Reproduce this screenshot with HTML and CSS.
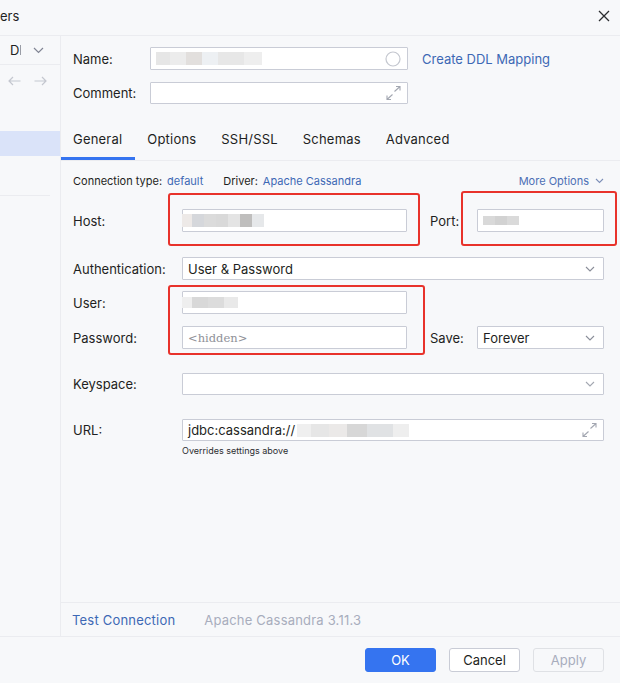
FILE: index.html
```html
<!DOCTYPE html>
<html>
<head>
<meta charset="utf-8">
<link rel="stylesheet" href="styles.css">
</head>
<body>
<div class="window">
  <div class="titlebar">
    <span class="title">ers</span>
    <svg class="close" width="12" height="12" viewBox="0 0 12 12"><path d="M1 1L11 11M11 1L1 11" stroke="#2b2d30" stroke-width="1.3" fill="none"/></svg>
  </div>

  <div class="content">
    <aside class="sidebar">
      <div class="side-top">
        <span class="side-d">D</span><span class="side-cut"></span>
        <svg class="side-chev" width="11" height="7" viewBox="0 0 11 7"><path d="M1 1l4.5 4.5L10 1" stroke="#818594" stroke-width="1.2" fill="none"/></svg>
      </div>
      <div class="side-nav">
        <svg width="13" height="10" viewBox="0 0 13 10"><path d="M12.5 5H1M5 1L1 5l4 4" stroke="#c4c7cf" stroke-width="1.2" fill="none"/></svg>
        <svg width="13" height="10" viewBox="0 0 13 10"><path d="M0.5 5H12M8 1l4 4-4 4" stroke="#c4c7cf" stroke-width="1.2" fill="none"/></svg>
      </div>
      <div class="side-sel"></div>
      <div class="side-line"></div>
    </aside>

    <main class="main">
      <div class="top-row">
        <span class="top-label">Name:</span>
        <div class="field top-field">
          <span class="mosaic">
            <i class="b1"></i><i class="b2"></i><i class="b3"></i><i class="b4"></i><i class="b5"></i><i class="b6"></i>
          </span>
          <svg class="circle" width="16" height="16" viewBox="0 0 16 16"><circle cx="8" cy="8" r="7" stroke="#c4c7cf" stroke-width="1.2" fill="none"/></svg>
        </div>
        <span class="link ddl">Create DDL Mapping</span>
      </div>
      <div class="top-row comment-row">
        <span class="top-label">Comment:</span>
        <div class="field top-field comment-field">
          <svg class="expand" width="15" height="14" viewBox="0 0 15 14"><path d="M8.5 5.5L14 0.5M10 0.5h4v4M6.5 8.5L1 13.5M1 9.5v4h4" stroke="#a3a7b1" stroke-width="1.1" fill="none"/></svg>
        </div>
      </div>

      <nav class="tabs">
        <span class="tab active">General</span>
        <span class="tab">Options</span>
        <span class="tab">SSH/SSL</span>
        <span class="tab">Schemas</span>
        <span class="tab">Advanced</span>
      </nav>

      <div class="meta">
        <span class="meta-label">Connection type:</span>
        <span class="link meta-link">default</span>
        <span class="meta-label driver">Driver:</span>
        <span class="link meta-link">Apache Cassandra</span>
        <span class="link more">More Options
          <svg width="9" height="6" viewBox="0 0 9 6"><path d="M1 1l3.5 3.5L8 1" stroke="#7d8fb8" stroke-width="1.1" fill="none"/></svg>
        </span>
      </div>

      <div class="row row-host">
        <span class="label">Host:</span>
        <div class="field">
          <span class="mosaic host-mosaic">
            <i class="h1"></i><i class="h2"></i><i class="h3"></i><i class="h4"></i><i class="h5"></i><i class="h6"></i><i class="h7"></i>
          </span>
        </div>
        <span class="gap"></span>
        <span class="label">Port:</span>
        <div class="field">
          <span class="mosaic port-mosaic"><i class="p1"></i><i class="p2"></i><i class="p3"></i></span>
        </div>
      </div>

      <div class="row row-auth">
        <span class="label">Authentication:</span>
        <div class="field wide select">
          <span class="value">User &amp; Password</span>
          <svg class="chev" width="10" height="6" viewBox="0 0 10 6"><path d="M1 1l4 4 4-4" stroke="#8a8e99" stroke-width="1.1" fill="none"/></svg>
        </div>
      </div>

      <div class="row row-user">
        <span class="label">User:</span>
        <div class="field">
          <span class="mosaic user-mosaic"><i class="u1"></i><i class="u2"></i><i class="u3"></i><i class="u4"></i></span>
        </div>
      </div>

      <div class="row row-pass">
        <span class="label">Password:</span>
        <div class="field">
          <span class="hidden">&lt;hidden&gt;</span>
        </div>
        <span class="gap"></span>
        <span class="label">Save:</span>
        <div class="field select">
          <span class="value">Forever</span>
          <svg class="chev" width="10" height="6" viewBox="0 0 10 6"><path d="M1 1l4 4 4-4" stroke="#8a8e99" stroke-width="1.1" fill="none"/></svg>
        </div>
      </div>

      <div class="row row-key">
        <span class="label">Keyspace:</span>
        <div class="field wide select">
          <span class="value"></span>
          <svg class="chev" width="10" height="6" viewBox="0 0 10 6"><path d="M1 1l4 4 4-4" stroke="#a3a7b1" stroke-width="1.1" fill="none"/></svg>
        </div>
      </div>

      <div class="row row-url">
        <span class="label">URL:</span>
        <div class="field wide">
          <span class="value">jdbc:cassandra://</span>
          <span class="mosaic url-mosaic"><i class="r1"></i><i class="r2"></i><i class="r3"></i><i class="r4"></i><i class="r5"></i><i class="r6"></i></span>
          <svg class="expand" width="15" height="14" viewBox="0 0 15 14"><path d="M8.5 5.5L14 0.5M10 0.5h4v4M6.5 8.5L1 13.5M1 9.5v4h4" stroke="#a3a7b1" stroke-width="1.1" fill="none"/></svg>
        </div>
      </div>
      <div class="hint">Overrides settings above</div>

      <div class="spacer"></div>

      <div class="footer">
        <span class="link test">Test Connection</span>
        <span class="version">Apache Cassandra 3.11.3</span>
      </div>
    </main>
  </div>

  <div class="buttons">
    <span class="btn ok">OK</span>
    <span class="btn">Cancel</span>
    <span class="btn disabled">Apply</span>
  </div>

  <div class="mark mark-host"></div>
  <div class="mark mark-port"></div>
  <div class="mark mark-user"></div>
</div>
</body>
</html>
```

FILE: styles.css
```css
* { box-sizing: border-box; }

html, body {
  margin: 0;
  padding: 0;
}

body {
  width: 620px;
  height: 683px;
  overflow: hidden;
  background: #f7f8fa;
  font-family: Inter, "Noto Sans", sans-serif;
  font-size: 13px;
  color: #1e1f22;
}

.window {
  position: relative;
  width: 620px;
  height: 683px;
  display: flex;
  flex-direction: column;
}

/* title bar */
.titlebar {
  height: 36px;
  flex: none;
  display: flex;
  align-items: center;
  justify-content: space-between;
  border-bottom: 1px solid #ebecf0;
  padding: 0 10px 1px 0;
}
.title { font-size: 13px; margin-top: -3px; }
.close { margin-top: -3px; }

/* content */
.content {
  flex: 1;
  display: flex;
  border-bottom: 1px solid #ebecf0;
}

.sidebar {
  width: 61px;
  flex: none;
  border-right: 1px solid #ebecf0;
  display: flex;
  flex-direction: column;
}
.side-top {
  height: 29px;
  border-bottom: 1px solid #ebecf0;
  display: flex;
  align-items: center;
  padding-left: 10px;
}
.side-d { font-size: 13px; }
.side-cut {
  width: 1px;
  height: 10px;
  background: #9a9da6;
  margin-left: 1px;
}
.side-chev { margin-left: 12px; }
.side-nav {
  height: 32px;
  display: flex;
  align-items: center;
  gap: 13px;
  padding-left: 8px;
}
.side-sel {
  margin-top: 34px;
  height: 25px;
  background: #dae3f9;
}
.side-line {
  margin-top: 39px;
  height: 1px;
  width: 50px;
  background: #ebecf0;
}

/* main */
.main {
  flex: 1;
  display: flex;
  flex-direction: column;
  padding-top: 11px;
}

.top-row {
  display: flex;
  align-items: center;
  padding-left: 12px;
  height: 23px;
}
.comment-row {
  margin-top: 12px;
  height: 22px;
}
.top-label { width: 77px; }

.field {
  position: relative;
  height: 100%;
  background: #fff;
  border: 1px solid #c9ccd6;
  border-radius: 1px;
  display: flex;
  align-items: center;
  padding: 0 6px 0 5px;
}
.top-field { width: 258px; }
.circle { margin-left: auto; }
.expand { margin-left: auto; }
.comment-field { justify-content: flex-end; }

.link { color: #3d68b5; }
.ddl { margin-left: 14px; }

/* tabs */
.tabs {
  margin-top: 15px;
  height: 42px;
  display: flex;
  border-bottom: 1px solid #ebecf0;
}
.tab {
  height: 41px;
  line-height: 41px;
  padding: 0 13px 0 12px;
  font-size: 13px;
  letter-spacing: 0.2px;
  color: #1e1f22;
}
.tab.active {
  box-shadow: inset 0 -3px 0 #3574f0;
}

/* meta row */
.meta {
  margin-top: 12px;
  height: 16px;
  display: flex;
  align-items: center;
  padding: 0 16px 0 12px;
  font-size: 11px;
}
.meta-link { margin-left: 5px; }
.driver { margin-left: 20px; }
.more {
  margin-left: auto;
  display: flex;
  align-items: center;
  gap: 6px;
  color: #4d6fb5;
}

/* form rows */
.row {
  display: grid;
  grid-template-columns: 109px 225px 23px 47px 127px;
  align-items: center;
  padding-left: 12px;
  height: 23px;
}
.row .field { height: 23px; }
.row-host { margin-top: 20px; }
.row-auth { margin-top: 25px; }
.row-user { margin-top: 11px; }
.row-pass { margin-top: 12px; }
.row-key { margin-top: 24px; height: 22px; }
.row-url { margin-top: 24px; height: 22px; }
.row-key .field, .row-url .field { height: 22px; }

.wide { grid-column: 2 / 6; }
.select .chev { margin-left: auto; margin-right: 2px; }

.hidden {
  font-family: "DejaVu Serif", "Liberation Serif", serif;
  font-size: 11.5px;
  color: #8f9198;
}

.hint {
  margin-top: 3px;
  padding-left: 121px;
  font-size: 9px;
  line-height: 14px;
  color: #2b2d30;
}

.spacer { flex: 1; }

.footer {
  height: 34px;
  border-top: 1px solid #ebecf0;
  display: flex;
  align-items: center;
  padding-left: 11px;
  gap: 29px;
  letter-spacing: 0.2px;
}
.test { color: #3d68b5; }
.version { color: #a8adbd; }

/* bottom buttons */
.buttons {
  height: 46px;
  flex: none;
  display: flex;
  justify-content: flex-end;
  gap: 13px;
  padding: 11px 16px 0 0;
}
.btn {
  width: 71px;
  height: 24px;
  border: 1px solid #c9ccd6;
  border-radius: 3px;
  background: #fff;
  display: flex;
  align-items: center;
  justify-content: center;
  font-size: 13px;
}
.btn.ok {
  background: #3574f0;
  border-color: #3574f0;
  color: #fff;
}
.btn.disabled {
  background: #f7f8fa;
  border-color: #dfe1e5;
  color: #a8adbd;
}

/* pixelated (blurred-out) values */
.mosaic { display: flex; height: 13px; }
.mosaic i { display: block; height: 100%; }
.b1 { width: 14px; background: #e6e6e6; }
.b2 { width: 16px; background: #ececec; }
.b3 { width: 16px; background: #e2dfdd; }
.b4 { width: 16px; background: #edf0f3; }
.b5 { width: 26px; background: #e7e7e7; }
.b6 { width: 18px; background: #eeeeee; }

.host-mosaic { margin-left: -6px; }
.h1 { width: 10px; background: #ede9e7; }
.h2 { width: 12px; background: #d5d7db; }
.h3 { width: 12px; background: #dbdbdb; }
.h4 { width: 12px; background: #d9d9d9; }
.h5 { width: 12px; background: #e4e4e4; }
.h6 { width: 12px; background: #bfbebd; }
.h7 { width: 12px; background: #e6e8ea; }

.port-mosaic { height: 9px; }
.p1 { width: 12px; background: #d9d9d9; }
.p2 { width: 12px; background: #d2d2d2; }
.p3 { width: 12px; background: #dadada; }

.user-mosaic { height: 11px; margin-left: -6px; }
.u1 { width: 10px; background: #eeeeee; }
.u2 { width: 16px; background: #d8d8d8; }
.u3 { width: 16px; background: #dcdcdc; }
.u4 { width: 14px; background: #e9e9e9; }

.url-mosaic { height: 13px; margin-left: 2px; }
.r1 { width: 14px; background: #efefef; }
.r2 { width: 18px; background: #e6e6e6; }
.r3 { width: 18px; background: #ebe9e8; }
.r4 { width: 20px; background: #d7d7d7; }
.r5 { width: 26px; background: #e0e2e4; }
.r6 { width: 16px; background: #eeeeee; }

/* red annotation boxes laid over the form */
.mark {
  position: absolute;
  border: 2.5px solid #e8322b;
  border-radius: 3px;
}
.mark-host { left: 168px; top: 193px; width: 252px; height: 53px; }
.mark-port { left: 461px; top: 191px; width: 156px; height: 55px; }
.mark-user { left: 168px; top: 285px; width: 257px; height: 70px; }
```
